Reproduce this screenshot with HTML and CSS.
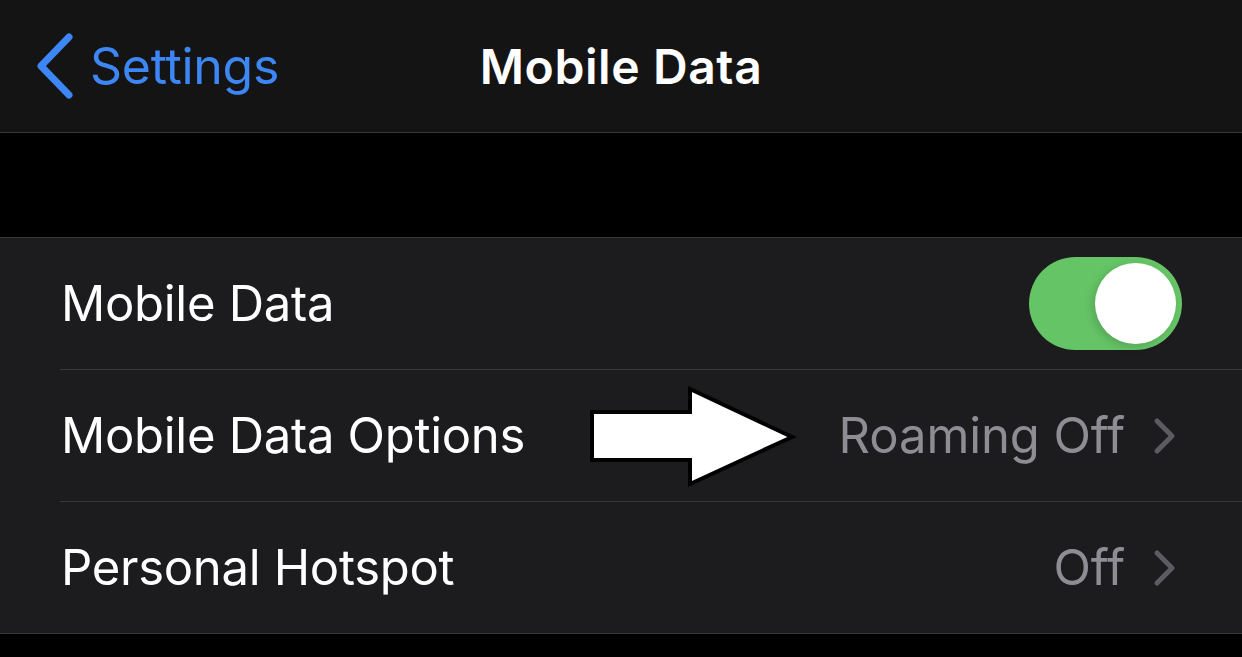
FILE: index.html
```html
<!DOCTYPE html>
<html lang="en">

<head>
    <meta charset="UTF-8">
    <meta name="viewport" content="width=device-width, initial-scale=1.0">
    <title>Mobile Data</title>

    <link rel="stylesheet" href="styles.css">
</head>

<body>

    <div class="navbar">
        <div class="back">
            <svg class="backChevron" width="40" height="66" viewBox="0 0 40 66">
                <polyline points="34,4 6,33 34,62" fill="none" stroke="#3d86f6" stroke-width="7" stroke-linecap="round" stroke-linejoin="round" />
            </svg>
            <span>Settings</span>
        </div>
        <h1 class="title">Mobile Data</h1>
    </div>

    <div class="gap"></div>

    <div class="group">
        <div class="row">
            <span class="label">Mobile Data</span>
            <div class="toggle">
                <div class="knob"></div>
            </div>
        </div>
        <div class="row">
            <span class="label">Mobile Data Options</span>
            <span class="value">Roaming Off</span>
            <svg class="chevron" width="24" height="38" viewBox="0 0 24 38">
                <polyline points="4,4 19,19 4,34" fill="none" stroke="#5b5b60" stroke-width="5" stroke-linecap="round" stroke-linejoin="round" />
            </svg>
        </div>
        <div class="row">
            <span class="label">Personal Hotspot</span>
            <span class="value">Off</span>
            <svg class="chevron" width="24" height="38" viewBox="0 0 24 38">
                <polyline points="4,4 19,19 4,34" fill="none" stroke="#5b5b60" stroke-width="5" stroke-linecap="round" stroke-linejoin="round" />
            </svg>
        </div>
    </div>

    <!-- pil lagt over skjermbildet -->
    <svg class="pointer" width="210" height="102" viewBox="0 0 210 102">
        <polygon points="4,26 102,26 102,3 204,51 102,98 102,74 4,74" fill="#ffffff" stroke="#000000" stroke-width="4" stroke-linejoin="miter" />
    </svg>

</body>

</html>
```

FILE: styles.css
```css
body {
    margin: 0;
    background-color: #000000;
    font-family: Inter, "Noto Sans", sans-serif;
    color: #ffffff;
    position: relative;
    height: 657px;
    overflow: hidden;
}

.navbar {
    height: 132px;
    background-color: #141414;
    border-bottom: 1px solid #38383a;
    display: flex;
    align-items: center;
    justify-content: center;
    position: relative;
}

.back {
    position: absolute;
    left: 35px;
    top: 0;
    height: 132px;
    display: flex;
    align-items: center;
    color: #3d86f6;
    font-size: 50px;
    letter-spacing: -0.3px;
}

.backChevron {
    margin-right: 15px;
}

.title {
    margin: 0;
    font-size: 48px;
    font-weight: 600;
    letter-spacing: 0.6px;
}

.gap {
    height: 104px;
}

.group {
    background-color: #1c1c1e;
    border-top: 1px solid #38383a;
    border-bottom: 1px solid #38383a;
}

.row {
    height: 131px;
    margin-left: 60px;
    padding-left: 1px;
    padding-right: 60px;
    display: flex;
    align-items: center;
    border-bottom: 1px solid #38383a;
    font-size: 49px;
    letter-spacing: -0.3px;
}

.row:last-child {
    border-bottom: none;
}

.label {
    flex: 1;
}

.value {
    color: #8d8d93;
    margin-right: 28px;
    letter-spacing: -0.1px;
}

.chevron {
    margin-right: 5px;
}

.toggle {
    width: 153px;
    height: 93px;
    border-radius: 47px;
    background-color: #65c466;
    position: relative;
}

.knob {
    position: absolute;
    right: 6px;
    top: 6px;
    width: 81px;
    height: 81px;
    border-radius: 50%;
    background-color: #ffffff;
    box-shadow: -3px 3px 8px rgba(0, 0, 0, 0.15);
}

.pointer {
    position: absolute;
    left: 588px;
    top: 386px;
}
```
